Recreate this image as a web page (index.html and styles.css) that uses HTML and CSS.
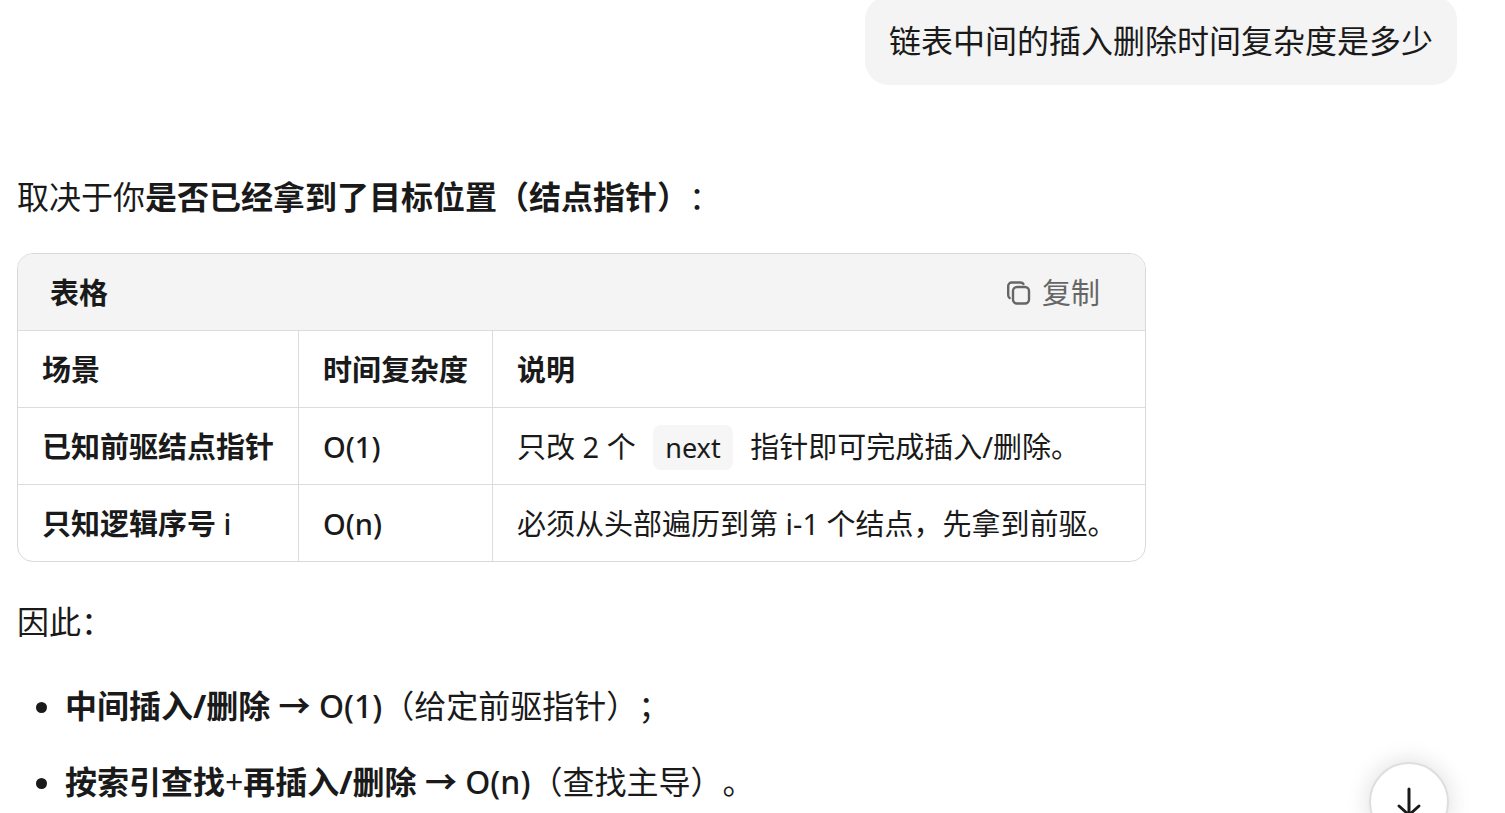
FILE: index.html
```html
<!DOCTYPE html>
<html lang="zh-CN">
<head>
    <meta charset="UTF-8">
    <meta name="viewport" content="width=device-width, initial-scale=1.0">
    <title>链表插入删除的时间复杂度</title>
    <link rel="stylesheet" href="styles.css">
</head>
<body>
    <main class="chat">
        <div class="user-message">链表中间的插入删除时间复杂度是多少</div>

        <div class="answer">
            <p>取决于你<strong>是否已经拿到了目标位置（结点指针）</strong>：</p>

            <section class="table-card">
                <div class="table-header">
                    <span class="table-title" id="table-title">表格</span>
                    <button type="button" class="copy-btn">
                        <svg class="copy-icon" viewBox="0 0 24 24" aria-hidden="true">
                            <rect x="7" y="6" width="16" height="16.500" rx="4"/>
                            <path d="M3.600 17C2.500 16.200 2.200 15.400 2.200 14V5a3.500 3.500 0 0 1 3.500-3.500h8.500c1.800 0 2.800.6 3.200 1.500"/>
                        </svg>
                        复制
                    </button>
                </div>
                <table aria-labelledby="table-title">
                    <thead>
                        <tr>
                            <th>场景</th>
                            <th>时间复杂度</th>
                            <th>说明</th>
                        </tr>
                    </thead>
                    <tbody>
                        <tr>
                            <td><strong>已知前驱结点指针</strong></td>
                            <td><span class="cost">O(1)</span></td>
                            <td>只改 2 个 <code>next</code> 指针即可完成插入/删除。</td>
                        </tr>
                        <tr>
                            <td><strong>只知逻辑序号 <span class="cost">i</span></strong></td>
                            <td><span class="cost">O(n)</span></td>
                            <td>必须从头部遍历到第 i-1 个结点，先拿到前驱。</td>
                        </tr>
                    </tbody>
                </table>
            </section>

            <p>因此：</p>

            <ul>
                <li><strong>中间插入/删除 →</strong> <span class="cost">O(1)</span>（给定前驱指针）；</li>
                <li><strong>按索引查找</strong>+<strong>再插入/删除 →</strong> <span class="cost">O(n)</span>（查找主导）。</li>
            </ul>
        </div>
    </main>

    <button type="button" class="scroll-btn" aria-label="滚动到底部">
        <svg viewBox="0 0 32 32" aria-hidden="true">
            <path d="M16 3v26M6 20l10 9 10-9"/>
        </svg>
    </button>
</body>
</html>
```

FILE: styles.css
```css
* {
    box-sizing: border-box;
}

body {
    margin: 0;
    background-color: #fff;
    color: #1a1a1a;
    font-family: "Noto Sans", "Noto Sans CJK SC", sans-serif;
    font-size: 32px;
    line-height: 56px;
    text-spacing-trim: space-all;
}

.chat {
    display: flex;
    flex-direction: column;
    padding: 0 48px 0 17px;
}

/* scrolled slightly past the top of the window */
.user-message {
    align-self: flex-end;
    margin-top: -4px;
    padding: 17px 24px 16px;
    background-color: #f4f4f4;
    border-radius: 24px;
}

.answer {
    margin-top: 84px;
}

p {
    margin: 0;
}

strong {
    font-weight: 700;
}

.cost {
    font-weight: 500;
}

.table-card {
    max-width: 1129px;
    margin: 28px 0 32px;
    border: 1px solid #d9d9d9;
    border-radius: 16px;
    overflow: hidden;
    font-size: 29px;
    line-height: 44px;
}

.table-header {
    display: flex;
    justify-content: space-between;
    align-items: center;
    padding: 17px 45px 15px 32px;
    background-color: #f4f4f4;
}

.table-title {
    font-weight: 700;
}

.copy-btn {
    display: flex;
    align-items: center;
    gap: 12px;
    padding: 0;
    border: none;
    background: none;
    color: #666;
    font: inherit;
    cursor: pointer;
}

.copy-icon {
    width: 24px;
    height: 24px;
    fill: none;
    stroke: currentColor;
    stroke-width: 2.4;
    stroke-linecap: round;
    overflow: visible;
}

table {
    width: 100%;
    border-collapse: separate;
    border-spacing: 0;
}

th,
td {
    height: 77px;
    padding: 2px 24px 0;
    border-top: 1px solid #dcdcdc;
    border-right: 1px solid #dcdcdc;
    text-align: left;
    white-space: nowrap;
}

th:last-child,
td:last-child {
    width: 100%;
    border-right: none;
}

code {
    margin: 0 10px;
    padding: 4px 12px;
    background-color: #f6f6f6;
    border-radius: 8px;
    font-family: inherit;
    font-size: 27px;
}

ul {
    display: flex;
    flex-direction: column;
    gap: 20px;
    margin: 28px 0 0;
    padding-left: 48px;
}

.scroll-btn {
    position: fixed;
    right: 56px;
    bottom: -29px;
    display: flex;
    justify-content: center;
    align-items: center;
    width: 80px;
    height: 80px;
    padding: 0;
    border: 2px solid #dedede;
    border-radius: 50%;
    background-color: #fff;
    box-shadow: 0 0 24px rgba(0, 0, 0, 0.14);
    cursor: pointer;
}

.scroll-btn svg {
    width: 32px;
    height: 32px;
    fill: none;
    stroke: #1a1a1a;
    stroke-width: 3;
    stroke-linecap: round;
    stroke-linejoin: round;
}
```
